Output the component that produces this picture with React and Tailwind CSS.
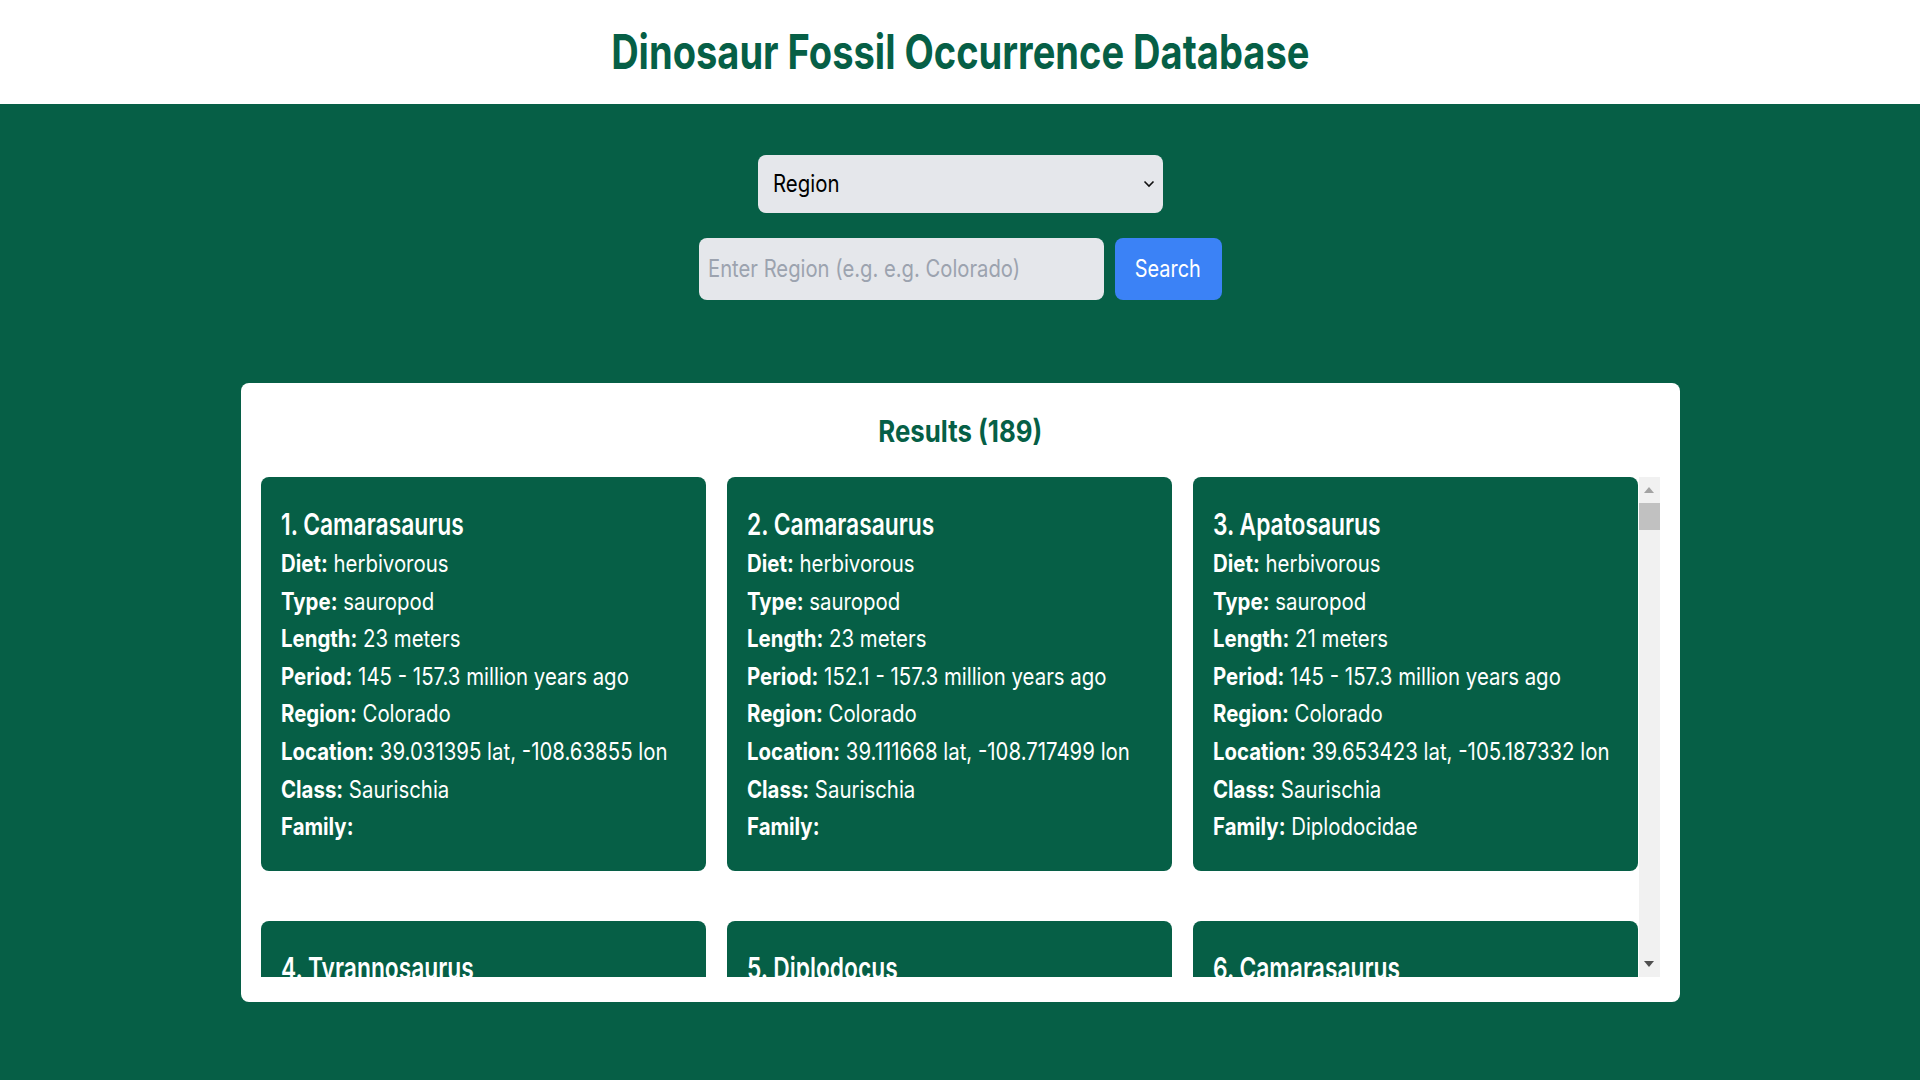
import React from "react";

const cards = [
  { n: 1, name: "Camarasaurus", diet: "herbivorous", type: "sauropod", length: "23 meters", period: "145 - 157.3 million years ago", region: "Colorado", loc: "39.031395 lat, -108.63855 lon", cls: "Saurischia", family: "" },
  { n: 2, name: "Camarasaurus", diet: "herbivorous", type: "sauropod", length: "23 meters", period: "152.1 - 157.3 million years ago", region: "Colorado", loc: "39.111668 lat, -108.717499 lon", cls: "Saurischia", family: "" },
  { n: 3, name: "Apatosaurus", diet: "herbivorous", type: "sauropod", length: "21 meters", period: "145 - 157.3 million years ago", region: "Colorado", loc: "39.653423 lat, -105.187332 lon", cls: "Saurischia", family: "Diplodocidae" },
  { n: 4, name: "Tyrannosaurus", diet: "carnivorous", type: "large theropod", length: "12 meters", period: "66 - 68 million years ago", region: "Colorado", loc: "39.7 lat, -104.9 lon", cls: "Saurischia", family: "Tyrannosauridae" },
  { n: 5, name: "Diplodocus", diet: "herbivorous", type: "sauropod", length: "26 meters", period: "145 - 157.3 million years ago", region: "Colorado", loc: "39.2 lat, -108.6 lon", cls: "Saurischia", family: "Diplodocidae" },
  { n: 6, name: "Camarasaurus", diet: "herbivorous", type: "sauropod", length: "23 meters", period: "145 - 157.3 million years ago", region: "Colorado", loc: "39.1 lat, -108.7 lon", cls: "Saurischia", family: "" },
];

function Row({ label, value }) {
  return (
    <p className="text-[24px] leading-[37.6px] whitespace-nowrap">
      <span className="font-bold">{label}:</span>
      {value ? " " + value : ""}
    </p>
  );
}

function Card({ c }) {
  return (
    <div className="h-[394px] rounded-lg bg-[#065f46] text-white px-5 pt-[26px] pb-6">
      <h3 className="text-[30px] leading-[42px] font-semibold whitespace-nowrap">
        <span className="inline-block origin-left scale-x-[0.76]">
          {c.n}. {c.name}
        </span>
      </h3>
      <div className="origin-top-left scale-x-[0.85]">
        <Row label="Diet" value={c.diet} />
        <Row label="Type" value={c.type} />
        <Row label="Length" value={c.length} />
        <Row label="Period" value={c.period} />
        <Row label="Region" value={c.region} />
        <Row label="Location" value={c.loc} />
        <Row label="Class" value={c.cls} />
        <Row label="Family" value={c.family} />
      </div>
    </div>
  );
}

export default function App() {
  return (
    <div className="min-h-[1080px] bg-[#065f46] font-['Inter',sans-serif]">
      <header className="h-[104px] bg-white flex items-center justify-center">
        <h1 className="text-[48px] leading-none font-bold text-[#065f46]">
          <span className="inline-block origin-center scale-x-[0.793] whitespace-nowrap">
            Dinosaur Fossil Occurrence Database
          </span>
        </h1>
      </header>

      <div className="flex flex-col items-center pt-[51px]">
        <div className="w-[405px] h-[58px] rounded-lg bg-[#e5e7eb] flex items-center justify-between pl-[15px] pr-[8px]">
          <span className="inline-block origin-left scale-x-[0.85] text-[24px] text-black">Region</span>
          <svg width="12" height="8" viewBox="0 0 12 8" fill="none">
            <path d="M1.5 1.5 L6 6 L10.5 1.5" stroke="#111" strokeWidth="1.6" />
          </svg>
        </div>

        <div className="mt-[25px] flex gap-[11px]">
          <div className="w-[405px] h-[62px] rounded-lg bg-[#e5e7eb] flex items-center pl-[9px]">
            <span className="inline-block origin-left scale-x-[0.843] text-[24px] text-[#9ca3af] whitespace-nowrap">
              Enter Region (e.g. e.g. Colorado)
            </span>
          </div>
          <button className="w-[107px] h-[62px] rounded-lg bg-[#3b82f6] text-white text-[24px] flex items-center justify-center">
            <span className="inline-block origin-center scale-x-[0.83]">Search</span>
          </button>
        </div>

        <div className="mt-[83px] w-[1439px] rounded-lg bg-white px-5 pt-[27px] pb-[25px]">
          <h2 className="h-[42px] flex items-center justify-center text-[30px] font-bold text-[#065f46]">
            <span className="inline-block origin-center scale-x-[0.86] whitespace-nowrap">Results (189)</span>
          </h2>
          <div className="mt-[25px] flex gap-px h-[500px]">
            <div className="flex-1 overflow-hidden">
              <div className="grid grid-cols-3 gap-x-[21px] gap-y-[50px]">
                {cards.map((c) => (
                  <Card key={c.n} c={c} />
                ))}
              </div>
            </div>
            <div className="w-[21px] bg-[#f1f1f1] flex flex-col items-center">
              <div className="h-[26px] flex items-center justify-center">
                <svg width="10" height="6" viewBox="0 0 10 6">
                  <path d="M0 6 L5 0 L10 6 Z" fill="#a3a3a3" />
                </svg>
              </div>
              <div className="w-full h-[27px] bg-[#c1c1c1]" />
              <div className="flex-1" />
              <div className="h-[26px] flex items-center justify-center">
                <svg width="10" height="6" viewBox="0 0 10 6">
                  <path d="M0 0 L10 0 L5 6 Z" fill="#505050" />
                </svg>
              </div>
            </div>
          </div>
        </div>
      </div>
    </div>
  );
}
